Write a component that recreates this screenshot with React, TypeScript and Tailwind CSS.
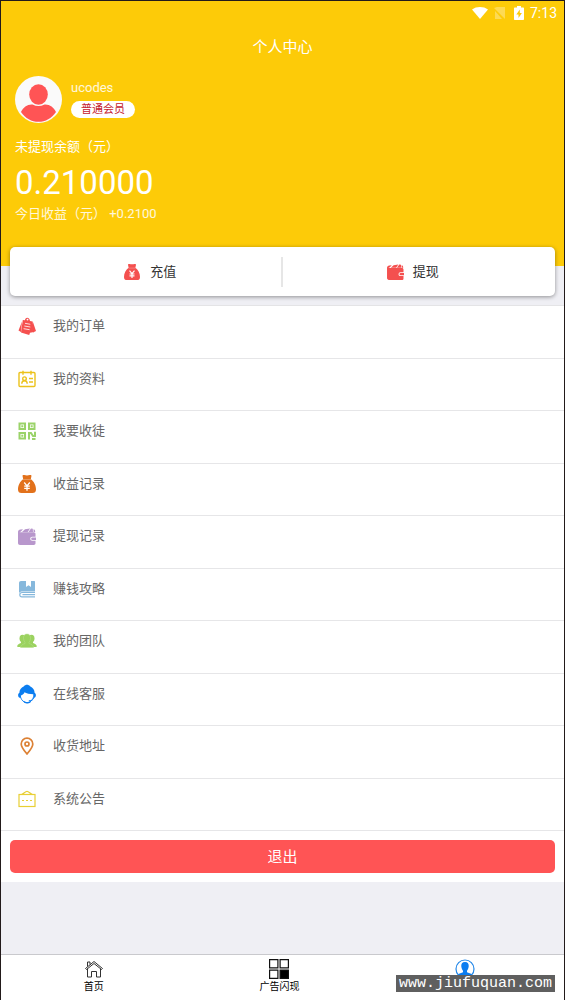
import type { ReactNode } from "react";

function MoneyBag({ className }: { className: string }) {
  return (
    <svg viewBox="0 0 18 20" className={className} aria-hidden="true">
      <path
        d="M4.500 1.800C4.500.8 5.500.8 6.200 1c1.800.5 3.800.5 5.600 0 .7-.2 1.700-.2 1.700.8L12.800 5.200C16 7.200 18 11.500 18 15.500c0 2.500-1.300 3.500-3.500 3.500h-11C1.300 19 0 18 0 15.500 0 11.500 2 7.200 5.200 5.200Z"
        fill="currentColor"
      />
      <path d="M5 5.600h8" stroke="#fff" strokeWidth=".5" opacity=".6" />
      <path
        d="M6.200 8.500 9 11.800l2.800-3.300M9 11.800v5M6.200 12.200h5.600M6.200 14.400h5.600"
        stroke="#fff"
        strokeWidth="1.300"
        fill="none"
      />
    </svg>
  );
}

function Wallet({ className }: { className: string }) {
  return (
    <svg viewBox="0 0 18 17" className={className} aria-hidden="true">
      <path
        d="M1.500 4.300h14.300c1 0 1.700.7 1.700 1.700v2.800h-3.300a2 2 0 0 0 0 4h3.300v2.500c0 1-.7 1.700-1.700 1.700H2c-1.200 0-2-.8-2-2V4c0-1.400 1-2.200 2.400-2.400L5 1.200 3 3.500Z"
        fill="currentColor"
      />
      <path d="M4 3.900 7 1.200 12 .4 9.700 3.900ZM10.500 3.900 13 .4l1.800.3.200 3.200ZM15.500 3.900V1.300c1.200.2 1.700 1 1.700 2.600Z" fill="currentColor" />
      <path d="M14.400 9.600H18v2.400h-3.600a1.200 1.200 0 0 1 0-2.400Z" fill="currentColor" />
    </svg>
  );
}

function OrderIcon() {
  return (
    <svg viewBox="0 0 18 18" className="size-[18px] text-[#f5504f]" aria-hidden="true">
      <path d="M4 4.500.5 13.500 3 15ZM14.800 4.500 18 14l-3 1.500Z" fill="currentColor" />
      <path d="m4.800 3 2.200.300C7 0 11.500-.2 12 3.900l2.600.6L16 15l-4 .8-.8 2.200-8.200-2.400Z" fill="currentColor" />
      <circle cx="9.500" cy="2.600" r=".9" fill="#fff" />
      <path d="m7 6.300 5.300 1M6.300 9l6 1M5.600 11.700l6 1" stroke="#fff" strokeWidth=".8" />
    </svg>
  );
}

function ProfileCardIcon() {
  return (
    <svg viewBox="0 0 18 18" className="size-[18px] text-[#ecc21c]" fill="none" stroke="currentColor" strokeWidth="1.400" aria-hidden="true">
      <rect x="1" y="2.500" width="16" height="14" rx="1" />
      <path d="M5 .8v4M13 .8v4M11 8.500h4M11 12h4M3.800 13.800c0-4 5.400-4 5.400 0" />
      <circle cx="6.500" cy="8.700" r="1.800" />
    </svg>
  );
}

function QrIcon() {
  return (
    <svg viewBox="0 0 18 18" className="size-[18px] text-[#9bd36a]" aria-hidden="true">
      <g fill="none" stroke="currentColor" strokeWidth="2">
        <path d="M1.500 1.500h5.500v5.500H1.500ZM11 1.500h5.500v5.500H11ZM1.500 11h5.500v5.500H1.500Z" />
        <path d="M11 17.500V11h2l2 3h2V9.800M14 17h3.500" />
      </g>
      <path d="M3.300 3.300h2v2h-2ZM12.700 3.300h2v2h-2ZM3.300 12.700h2v2h-2Z" fill="currentColor" />
    </svg>
  );
}

function BookIcon() {
  return (
    <svg viewBox="0 0 18 18" className="size-[18px] text-[#86b8dc]" aria-hidden="true">
      <path
        d="M3 1h5v6l2.500-1.800L13 7V1h3c.8 0 1 .4 1 1v9.500H3.800A3 3 0 0 0 1 13V3c0-1.300.8-2 2-2Z"
        fill="currentColor"
      />
      <path d="M17 12.500H4a2.200 2.200 0 0 0 0 4.400h13M4.500 14.700H17" stroke="currentColor" strokeWidth="1.200" fill="none" />
    </svg>
  );
}

function TeamIcon() {
  return (
    <svg viewBox="0 0 20 16" className="h-4 w-5 text-[#9bd25f]" aria-hidden="true">
      <g fill="currentColor">
        <ellipse cx="5.500" cy="5.500" rx="3" ry="3.700" />
        <ellipse cx="14.500" cy="5.500" rx="3" ry="3.700" />
        <path d="M.5 14c-1-2 1.500-3.200 3.500-4V7h12v3c2 .8 4.500 2 3.500 4Z" />
      </g>
      <path
        d="M10 1c2.600 0 3.800 2 3.500 4.500-.1 1.700-.8 3-1.500 3.800v1.200c2 .7 4.500 1.700 4.500 4h-13c0-2.300 2.500-3.300 4.500-4V9.300c-.7-.8-1.400-2.100-1.500-3.800C6.200 3 7.400 1 10 1Z"
        fill="currentColor"
        stroke="#b9e08f"
        strokeWidth=".5"
      />
    </svg>
  );
}

function ServiceIcon() {
  return (
    <svg viewBox="0 0 18 20" className="h-5 w-[18px] text-[#0b7df0]" aria-hidden="true">
      <path
        d="M6 2.200C7.200.2 10.800.2 12 2.200c3 1.300 4.600 3.700 4.600 6.600 1.700.7 1.700 4 0 4.900l-1.400-.2.100-3.300C12 10.200 8.200 9.400 6.500 8.200 5.900 9.900 4.500 10.900 2.900 11.400l.2 2-1.700.3c-1.700-.9-1.700-4.200 0-4.900C1.400 5.900 3 3.500 6 2.200Z"
        fill="currentColor"
      />
      <path d="M2.400 12.800c1 3.500 3.500 5.900 6.600 5.900s5.600-2.400 6.600-5.900M15.800 13.500c0 2-2 3.200-5 3.200" stroke="currentColor" strokeWidth=".9" fill="none" />
      <path d="M5.500 16.800c2.200 1.800 5 1.800 7.500 0l-.5 1.600c-2 1.300-4.500 1.300-6.500 0Z" fill="currentColor" />
    </svg>
  );
}

function PinIcon() {
  return (
    <svg viewBox="0 0 18 18" className="size-[18px] text-[#dc8135]" fill="none" stroke="currentColor" strokeWidth="1.700" aria-hidden="true">
      <path d="M9 17C6 13.500 3.200 10.300 3.200 7a5.800 5.800 0 0 1 11.600 0c0 3.300-2.800 6.500-5.800 10Z" />
      <circle cx="9" cy="7" r="2" />
    </svg>
  );
}

function NoticeIcon() {
  return (
    <svg viewBox="0 0 18 18" className="size-[18px] text-[#e8cf35]" fill="none" stroke="currentColor" strokeWidth="1.200" aria-hidden="true">
      <rect x="1" y="4.500" width="16" height="12" />
      <path d="M3.500 4.500C6 3.800 7 1.300 9 1.300s3 2.500 5.500 3.200" />
      <path d="M4 10.500h2M8 10.500h2M12 10.500h2" />
    </svg>
  );
}

const menu: { label: string; icon: ReactNode }[] = [
  { label: "我的订单", icon: <OrderIcon /> },
  { label: "我的资料", icon: <ProfileCardIcon /> },
  { label: "我要收徒", icon: <QrIcon /> },
  { label: "收益记录", icon: <MoneyBag className="h-5 w-[18px] text-[#e2711b]" /> },
  { label: "提现记录", icon: <Wallet className="h-[17px] w-[18px] text-[#b897cc]" /> },
  { label: "赚钱攻略", icon: <BookIcon /> },
  { label: "我的团队", icon: <TeamIcon /> },
  { label: "在线客服", icon: <ServiceIcon /> },
  { label: "收货地址", icon: <PinIcon /> },
  { label: "系统公告", icon: <NoticeIcon /> },
];

function StatusBar() {
  return (
    <div className="flex h-6 items-center justify-end pr-[7px] text-white">
      <svg viewBox="0 0 16 12" className="h-3 w-4" aria-hidden="true">
        <path d="M0 2.500C4.500-.8 11.500-.8 16 2.500L8 12Z" fill="currentColor" />
      </svg>
      <svg viewBox="0 0 12 12" className="ml-[6px] size-3 opacity-30" aria-hidden="true">
        <path d="M3 0h8v12L0 1Z" fill="currentColor" />
        <path d="M1 4v8h7Z" fill="currentColor" />
      </svg>
      <svg viewBox="0 0 10 14" className="ml-2 h-[14px] w-[10px]" aria-hidden="true">
        <path d="M3 0h4v1.500h2.300c.4 0 .7.300.7.700V13c0 .6-.4 1-1 1H1c-.6 0-1-.4-1-1V2.200c0-.4.3-.7.7-.7H3Z" fill="currentColor" />
        <path d="M5.800 3.500 2.300 8.500h2.200V12l3.400-5H5.800Z" fill="#fdcb08" />
      </svg>
      <span className="ml-[6px] text-[14px] leading-6">7:13</span>
    </div>
  );
}

export default function App() {
  return (
    <div className="flex min-h-screen flex-col border-x border-t border-[#221a1a] bg-[#efeff4] font-['Roboto','Noto_Sans_CJK_SC',sans-serif] text-[13px] leading-5">
      <header className="h-[265px] bg-[#fdcb08] text-white">
        <StatusBar />
        <h1 className="pt-[10px] text-center text-[15px] leading-6">个人中心</h1>
        <section className="px-[14px] pt-[17px]">
          <div className="flex items-center gap-[9px]">
            <svg viewBox="0 0 47 47" className="size-[47px]" role="img" aria-label="ucodes">
              <circle cx="23.500" cy="23.500" r="23.500" fill="#fafafa" />
              <ellipse cx="23.500" cy="18.500" rx="9.300" ry="10.300" fill="#ff5455" />
              <path d="M6 36c2-5 7-8 11.500-7.500 4 2 8 2 12 0C34 28 39 31 41 36c-4.500 6.500-10.500 9.800-17.500 9.800S10.500 42.500 6 36Z" fill="#ff5455" />
            </svg>
            <div>
              <p className="text-white/85">ucodes</p>
              <p className="mt-[3px] mb-1 rounded-full bg-white px-[10px] text-[11px] leading-[17px] text-[#c4202f]">普通会员</p>
            </div>
          </div>
          <p className="pt-[14px]">未提现余额（元）</p>
          <p className="pt-[6px] text-[33px] leading-10">0.210000</p>
          <p className="pt-px text-white/85">今日收益（元） +0.2100</p>
        </section>
      </header>

      <main>
        <div className="relative mx-[9px] -mt-[19px] mb-[9px] flex h-[49px] items-center rounded-[5px] bg-white text-[#333] shadow-[0_1px_4px_rgba(0,0,0,0.4)]">
          <a href="#recharge" className="flex flex-1 items-center justify-center gap-[10px] pl-[10px]">
            <MoneyBag className="h-[18px] w-4 text-[#f4504f]" />
            充值
          </a>
          <span className="h-[30px] w-[2px] bg-[#e6e6e6]" />
          <a href="#withdraw" className="flex flex-1 items-center justify-center gap-[9px] pr-3">
            <Wallet className="h-4 w-[17px] text-[#f4504f]" />
            提现
          </a>
        </div>

        <ul className="grid h-[526px] auto-rows-fr border-t border-[#e4e4e6] bg-white text-[#666]">
          {menu.map((item) => (
            <li key={item.label} className="border-b border-[#e6e6e8]">
              <a href="#menu" className="flex h-full items-start gap-4 pl-4 pt-[10px]">
                <span className="flex h-5 w-5 items-center justify-center">{item.icon}</span>
                {item.label}
              </a>
            </li>
          ))}
        </ul>
        <div className="bg-white px-[9px] py-[9px]">
          <button type="button" className="h-[33px] w-full rounded-[5px] bg-[#ff5455] text-[15px] text-white">
            退出
          </button>
        </div>
      </main>

      <nav className="relative mt-auto grid h-[46px] grid-cols-3 border-t border-[#c9c9cd] bg-white pr-[6px] text-[10px] leading-3 text-black">
        <a href="#home" className="flex flex-col items-center pt-1">
          <svg viewBox="0 0 20 20" className="size-5" fill="none" stroke="#333" strokeWidth="1" aria-hidden="true">
            <path d="m1.500 9.500 8.500-7 8.500 7-1 1L10 4.500l-7.500 6ZM3.500 9.700V18h4v-5.500h5V18h4V9.700M3.500 7.500V3H6v2.500" />
          </svg>
          <span className="pt-[2px]">首页</span>
        </a>
        <a href="#ads" className="flex flex-col items-center pt-1">
          <svg viewBox="0 0 20 20" className="size-5" fill="none" stroke="#111" strokeWidth="1.200" aria-hidden="true">
            <path d="M.6.6h8.300v8.300H.6ZM11.100.6h8.300v8.300h-8.300ZM.6 11.100h8.300v8.300H.6Z" />
            <path d="M11.100 11.100h8.300v8.300h-8.300Z" fill="#000" />
          </svg>
          <span className="pt-[2px]">广告闪现</span>
        </a>
        <a href="#me" aria-label="个人中心" className="flex flex-col items-center pt-1">
          <svg viewBox="0 0 20 20" className="size-5" aria-hidden="true">
            <circle cx="10" cy="10" r="9" fill="#fff" stroke="#2387e8" strokeWidth="1.200" />
            <path d="M10 3c2.800 0 4 1.800 3.700 4.500-.2 2-1 3.300-1.700 4.200v1.500c1.500.7 4 1.200 5 2.300-1.700 2.300-4 3.500-7 3.500s-5.300-1.200-7-3.500c1-1.100 3.500-1.600 5-2.300v-1.500c-.7-.9-1.500-2.200-1.700-4.200C6 4.800 7.200 3 10 3Z" fill="#0b7df0" />
          </svg>
        </a>
        <span className="absolute right-[9px] bottom-2 bg-[#5f5f5f] px-[3px] font-['Liberation_Mono',monospace] text-[15px] leading-[17px] text-white">
          www.jiufuquan.com
        </span>
      </nav>
    </div>
  );
}
